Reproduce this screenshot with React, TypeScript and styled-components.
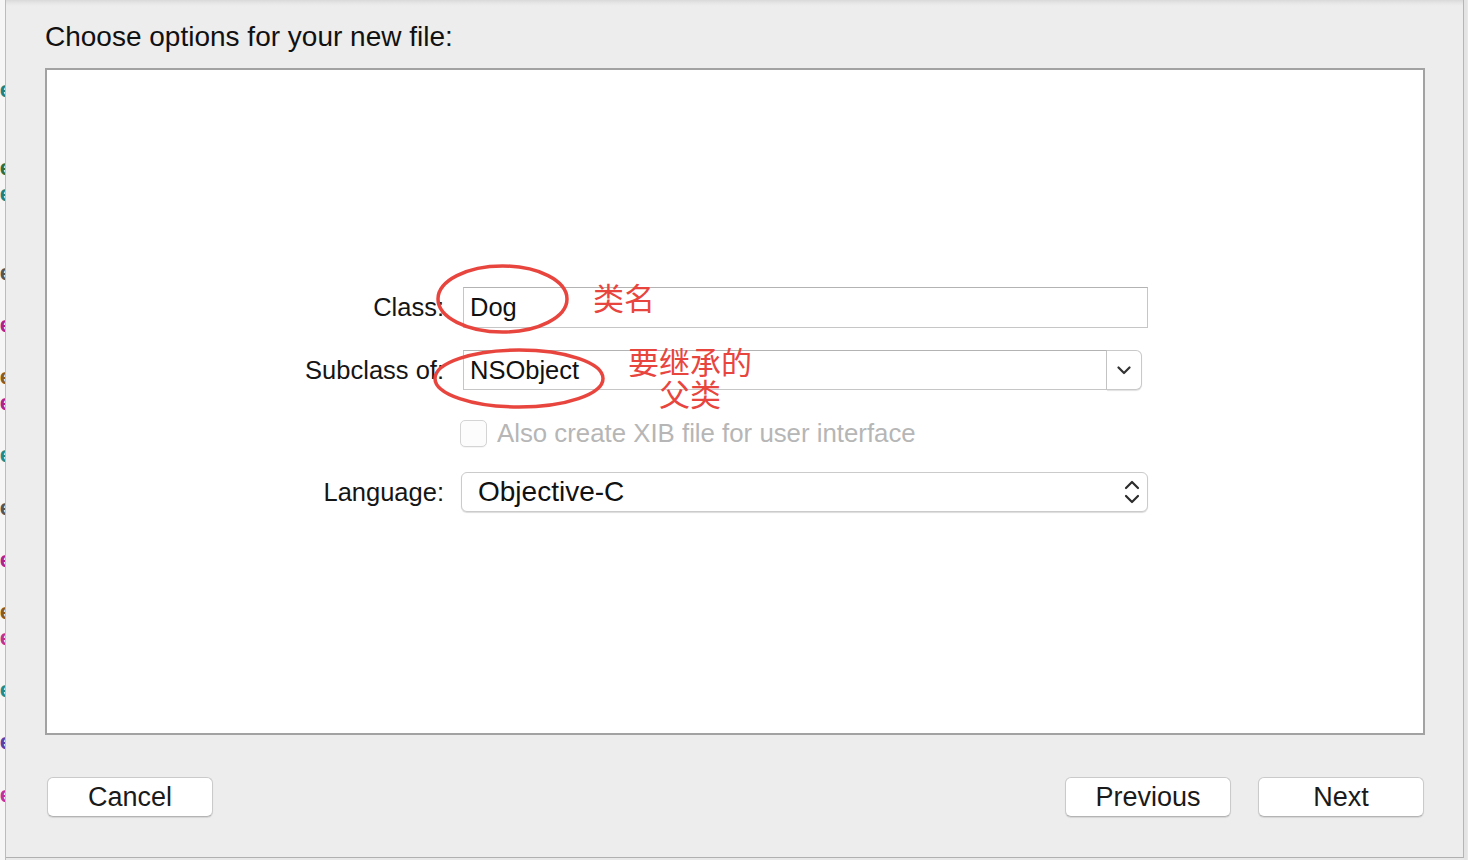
import styled, { createGlobalStyle } from "styled-components";

const GlobalStyle = createGlobalStyle`
	html, body {
		margin: 0;
		padding: 0;
		background: #e9e9e9;
		overflow: hidden;
	}
	body {
		font-family: "Liberation Sans", Arial, "Noto Sans CJK SC", sans-serif;
		color: #1b1b1b;
	}
`;

const Screen = styled.div`
	display: flex;
	align-items: flex-start;
	width: 1468px;
	height: 860px;
	overflow: hidden;
	background: #e9e9e9;
`;

/* the code editor behind the sheet, only its last few pixels show */
const EditorEdge = styled.div`
	width: 6px;
	height: 860px;
	padding-top: 77px;
	box-sizing: border-box;
	background: #f6f6f6;
	border-right: 1px solid #bcbcbc;
	overflow: hidden;
	flex-shrink: 0;
`;

const CodeLine = styled.div<{ $color?: string }>`
	display: flex;
	justify-content: flex-end;
	height: 26.1px;
	line-height: 26.1px;
	font-family: "Liberation Sans", sans-serif;
	font-size: 22px;
	font-weight: bold;
	white-space: nowrap;
	color: ${p => p.$color || "transparent"};
	margin-right: -7px;
`;

const Sheet = styled.div`
	display: flex;
	flex-direction: column;
	width: 1458px;
	height: 858px;
	box-sizing: border-box;
	padding: 20px 38px 0 39px;
	background: linear-gradient(#d9d9d9 0, #e6e6e6 3px, #ededed 6px, #ededed 100%);
	border-right: 1px solid #b5b5b5;
	border-bottom: 1px solid #b0b0b0;
	flex-shrink: 0;
`;

const Title = styled.div`
	font-size: 28px;
	line-height: 34px;
	color: #111;
	margin-bottom: 14px;
`;

const Box = styled.div`
	position: relative;
	height: 667px;
	box-sizing: border-box;
	background: #fff;
	border: 2px solid #a2a2a2;
	padding-top: 217px;
`;

const Row = styled.div<{ $top?: number }>`
	display: flex;
	align-items: center;
	margin-top: ${p => p.$top || 0}px;
`;

const Label = styled.div`
	width: 397px;
	text-align: right;
	font-size: 25.5px;
	color: #151515;
	margin-right: 19px;
	flex-shrink: 0;
`;

const TextField = styled.div<{ $width: number }>`
	display: flex;
	align-items: center;
	width: ${p => p.$width}px;
	height: 41px;
	box-sizing: border-box;
	padding-left: 6px;
	border: 1px solid #c6c6c6;
	border-top-color: #b3b3b3;
	background: #fff;
	font-size: 25.5px;
	color: #111;
`;

const Combo = styled.div`
	display: flex;
	width: 679px;
	height: 40px;

	& > ${TextField} {
		height: 40px;
	}
`;

const ComboButton = styled.div`
	display: flex;
	align-items: center;
	justify-content: center;
	width: 35px;
	height: 40px;
	box-sizing: border-box;
	border: 1px solid #c9c9c9;
	border-left: none;
	border-radius: 0 6px 6px 0;
	background: #fff;
	box-shadow: 0 1px 1px rgba(0, 0, 0, 0.12);
	color: #333;
`;

const CheckBox = styled.div`
	width: 27px;
	height: 27px;
	box-sizing: border-box;
	margin-left: -3px;
	border: 1px solid #d4d4d4;
	border-radius: 5px;
	background: #fcfcfc;
	box-shadow: 0 1px 0 rgba(0, 0, 0, 0.04);
`;

const CheckText = styled.span`
	margin-left: 10px;
	font-size: 25.8px;
	color: #b6b6b6;
`;

const Popup = styled.div`
	display: flex;
	align-items: center;
	justify-content: space-between;
	width: 687px;
	height: 40px;
	margin-left: -2px;
	box-sizing: border-box;
	padding: 0 7px 0 16px;
	border: 1px solid #cbcbcb;
	border-radius: 6px;
	background: #fff;
	box-shadow: 0 1px 1px rgba(0, 0, 0, 0.14);
	font-size: 28px;
	color: #111;
`;

const Ring = styled.svg<{ $x: number; $y: number }>`
	position: absolute;
	left: ${p => p.$x}px;
	top: ${p => p.$y}px;
	overflow: visible;
	pointer-events: none;
`;

const Note = styled.div<{ $x: number; $y: number }>`
	position: absolute;
	left: ${p => p.$x}px;
	top: ${p => p.$y}px;
	font-family: "Noto Sans CJK SC", sans-serif;
	font-size: 31px;
	line-height: 32px;
	text-align: center;
	color: #e8453e;
	white-space: nowrap;
`;

const Footer = styled.div`
	display: flex;
	justify-content: space-between;
	margin-top: 42px;
	padding: 0 1px 0 2px;
`;

const ButtonGroup = styled.div`
	display: flex;
	gap: 27px;
`;

const Button = styled.button`
	width: 166px;
	height: 40px;
	padding: 0;
	box-sizing: border-box;
	border: 1px solid #cacaca;
	border-bottom-color: #b4b4b4;
	border-radius: 6px;
	background: #fff;
	box-shadow: 0 1px 1px rgba(0, 0, 0, 0.1);
	font-family: "Liberation Sans", Arial, sans-serif;
	font-size: 27px;
	color: #1a1a1a;
`;

const RightEdge = styled.div`
	width: 3px;
	height: 860px;
	background: #e4e4e4;
	flex-shrink: 0;
`;

const codeColors: Record<number, string> = {
	0: "#1f8080",
	3: "#2f6f3f",
	4: "#1f8080",
	7: "#555",
	9: "#b0208f",
	11: "#8a5a20",
	12: "#b0208f",
	14: "#1f8a8a",
	16: "#555",
	18: "#b0208f",
	20: "#8a5a20",
	21: "#c03090",
	23: "#1f8a8a",
	25: "#5a40a8",
	27: "#c030a0",
};

const Ellipse = ({ x, y, w, h }: { x: number; y: number; w: number; h: number }) => (
	<Ring $x={x} $y={y} width={w} height={h} viewBox={`0 0 ${w} ${h}`}>
		<ellipse cx={w / 2} cy={h / 2} rx={w / 2 - 2} ry={h / 2 - 2} fill="none" stroke="#e8453e" strokeWidth={3.5} />
	</Ring>
);

const ChevronDown = () => (
	<svg width="14" height="9" viewBox="0 0 14 9">
		<path d="M1.5 1.5 L7 7 L12.5 1.5" fill="none" stroke="currentColor" strokeWidth="2.2" strokeLinecap="round" strokeLinejoin="round" />
	</svg>
);

const UpDown = () => (
	<svg width="16" height="26" viewBox="0 0 16 26" style={{ color: "#2c2c2c" }}>
		<path d="M2 9 L8 3 L14 9" fill="none" stroke="currentColor" strokeWidth="2.2" strokeLinecap="round" strokeLinejoin="round" />
		<path d="M2 17 L8 23 L14 17" fill="none" stroke="currentColor" strokeWidth="2.2" strokeLinecap="round" strokeLinejoin="round" />
	</svg>
);

const App = () => {
	return (
		<Screen>
			<GlobalStyle />
			<EditorEdge>
				{Array.from({ length: 30 }).map((_, i) => (
					<CodeLine key={i} $color={codeColors[i]}>{codeColors[i] ? "ee" : ""}</CodeLine>
				))}
			</EditorEdge>
			<Sheet>
				<Title>Choose options for your new file:</Title>
				<Box>
					<Row>
						<Label>Class:</Label>
						<TextField $width={685}>Dog</TextField>
					</Row>
					<Row $top={22}>
						<Label>Subclass of:</Label>
						<Combo>
							<TextField $width={644}>NSObject</TextField>
							<ComboButton><ChevronDown /></ComboButton>
						</Combo>
					</Row>
					<Row $top={29}>
						<Label />
						<CheckBox />
						<CheckText>Also create XIB file for user interface</CheckText>
					</Row>
					<Row $top={24}>
						<Label>Language:</Label>
						<Popup>
							<span>Objective-C</span>
							<UpDown />
						</Popup>
					</Row>

					<Ellipse x={389} y={194} w={133} h={70} />
					<Ellipse x={386} y={278} w={172} h={61} />
					<Note $x={546} $y={211}>类名</Note>
					<Note $x={581} $y={275}>要继承的<br />父类</Note>
				</Box>
				<Footer>
					<Button>Cancel</Button>
					<ButtonGroup>
						<Button>Previous</Button>
						<Button>Next</Button>
					</ButtonGroup>
				</Footer>
			</Sheet>
			<RightEdge />
		</Screen>
	);
};

export default App;
